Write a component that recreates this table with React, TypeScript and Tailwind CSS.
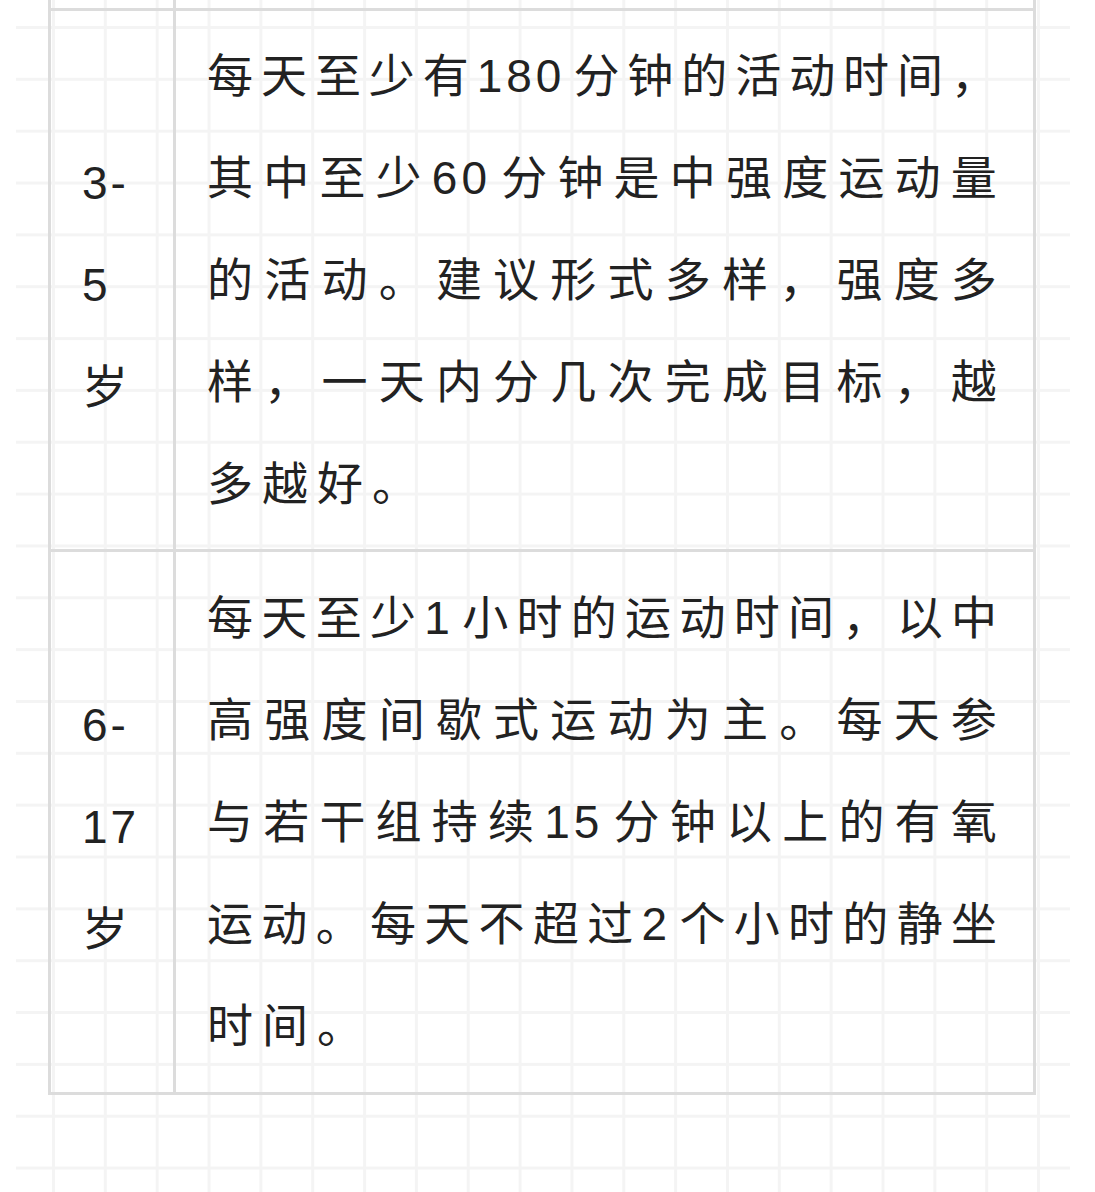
const rows = [
  {
    age: ["3-", "5", "岁"],
    lines: [
      "每天至少有180分钟的活动时间，",
      "其中至少60分钟是中强度运动量",
      "的活动。建议形式多样，强度多",
      "样，一天内分几次完成目标，越",
      "多越好。",
    ],
  },
  {
    age: ["6-", "17", "岁"],
    lines: [
      "每天至少1小时的运动时间，以中",
      "高强度间歇式运动为主。每天参",
      "与若干组持续15分钟以上的有氧",
      "运动。每天不超过2个小时的静坐",
      "时间。",
    ],
  },
];

// keep digit runs together, every other character on its own
const split = (line: string) => line.match(/\d+|./g) ?? [];

export default function App() {
  return (
    <div className="h-[1192px] w-full overflow-hidden bg-white text-[46px] text-[#222] [font-family:'Liberation_Sans','Noto_Sans_CJK_SC',sans-serif]">
      <div className="ml-[16px] mr-[25px] h-full bg-[linear-gradient(to_right,#f4f4f4_3px,transparent_3px),linear-gradient(to_bottom,#f4f4f4_3px,transparent_3px)] [background-position:36px_26px] [background-size:51.85px_51.85px]">
        <div className="ml-[32px] w-[988px]">
          {/* tail of the previous row */}
          <div className="flex h-[8px] border-x-[3px] border-[#dcdcdc]">
            <div className="w-[125px] border-r-[3px] border-[#dcdcdc]" />
          </div>
          <div className="border-[3px] border-[#dcdcdc]">
            {rows.map((row, i) => (
              <div
                key={i}
                className={`flex ${i > 0 ? "border-t-[3px] border-[#dcdcdc]" : ""}`}
              >
                <div className="flex w-[125px] shrink-0 items-center border-r-[3px] border-[#dcdcdc] pl-[31px] pt-[10px] tracking-[3px]">
                  <div>
                    {row.age.map((a) => (
                      <div key={a} className="h-[102px] leading-[102px]">
                        {a}
                      </div>
                    ))}
                  </div>
                </div>
                <div className={`flex-1 pl-[31px] pr-[36px] ${i === 0 ? "py-[14px]" : "py-[15px]"}`}>
                  {row.lines.map((line, j) => {
                    const last = j === row.lines.length - 1;
                    return (
                      <div
                        key={j}
                        className={`flex h-[102px] items-center leading-[102px] ${
                          last ? "gap-[9px]" : "justify-between"
                        }`}
                      >
                        {split(line).map((c, k) => (
                          <span key={k} className={/\d/.test(c) ? "tracking-[4px]" : ""}>
                            {c}
                          </span>
                        ))}
                      </div>
                    );
                  })}
                </div>
              </div>
            ))}
          </div>
        </div>
      </div>
    </div>
  );
}
